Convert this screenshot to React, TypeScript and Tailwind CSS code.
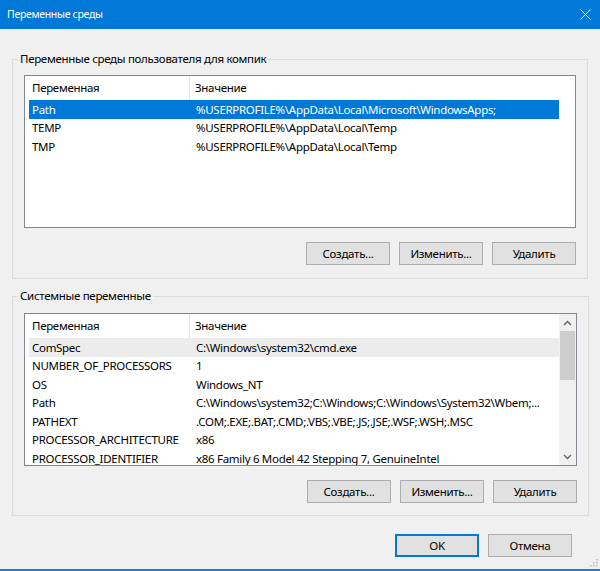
import React from 'react';

type Row = [string, string];

const USER_VARS: Row[] = [
  ['Path', '%USERPROFILE%\\AppData\\Local\\Microsoft\\WindowsApps;'],
  ['TEMP', '%USERPROFILE%\\AppData\\Local\\Temp'],
  ['TMP', '%USERPROFILE%\\AppData\\Local\\Temp'],
];

const SYSTEM_VARS: Row[] = [
  ['ComSpec', 'C:\\Windows\\system32\\cmd.exe'],
  ['NUMBER_OF_PROCESSORS', '1'],
  ['OS', 'Windows_NT'],
  ['Path', 'C:\\Windows\\system32;C:\\Windows;C:\\Windows\\System32\\Wbem;...'],
  ['PATHEXT', '.COM;.EXE;.BAT;.CMD;.VBS;.VBE;.JS;.JSE;.WSF;.WSH;.MSC'],
  ['PROCESSOR_ARCHITECTURE', 'x86'],
  ['PROCESSOR_IDENTIFIER', 'x86 Family 6 Model 42 Stepping 7, GenuineIntel'],
];

function Chevron({ up }: { up?: boolean }) {
  return (
    <svg width="9" height="6" viewBox="0 0 9 6" className="block">
      <polyline
        points={up ? '1,5 4.5,1.5 8,5' : '1,1 4.5,4.5 8,1'}
        fill="none"
        stroke="#606060"
        strokeWidth="1.3"
      />
    </svg>
  );
}

function VarList({ rows, selected, hovered, scroll }: {
  rows: Row[];
  selected?: number;
  hovered?: number;
  scroll?: boolean;
}) {
  return (
    <div className="flex h-[153px] border border-[#828790] bg-white">
      <div className="min-w-0 flex-1 overflow-hidden">
        {/* header */}
        <div className="flex h-[24px] items-center">
          <div className="w-[165px] border-r border-[#e5e5e5] pl-[7px] leading-[24px]">Переменная</div>
          <div className="pl-[5px]">Значение</div>
        </div>
        {rows.map(([name, value], i) => (
          <div
            key={name + i}
            className={`ml-[4px] flex h-[18.5px] w-[530px] items-center whitespace-nowrap ${
              i === selected ? 'bg-[#0078d7] text-white' : i === hovered ? 'bg-[#ececec]' : ''
            }`}
          >
            <div className="w-[161px] overflow-hidden pl-[3px]">{name}</div>
            <div className="flex-1 overflow-hidden pl-[6px]">{value}</div>
          </div>
        ))}
      </div>
      {scroll && (
        <div className="flex w-[17px] flex-col bg-[#f0f0f0]">
          <div className="flex h-[17px] items-center justify-center">
            <Chevron up />
          </div>
          <div className="mx-[1px] h-[49px] bg-[#cdcdcd]" />
          <div className="flex-1" />
          <div className="flex h-[17px] items-center justify-center">
            <Chevron />
          </div>
        </div>
      )}
    </div>
  );
}

function WinButton({ children, primary }: { children: React.ReactNode; primary?: boolean }) {
  return (
    <button
      type="button"
      className={`h-[23px] w-[84px] bg-[#e1e1e1] text-black ${
        primary ? 'border-2 border-[#0078d7]' : 'border border-[#adadad]'
      }`}
    >
      {children}
    </button>
  );
}

function GroupBox({ title, children, className }: {
  title: string;
  children: React.ReactNode;
  className?: string;
}) {
  return (
    <fieldset className={`border border-[#dcdcdc] ${className ?? ''}`}>
      <legend className="ml-[5px] px-[2px] leading-[16px]">{title}</legend>
      <div className="px-[11px]">{children}</div>
    </fieldset>
  );
}

export default function App() {
  return (
    <div
      className="flex h-[571px] w-[600px] flex-col border-b-[2px] border-[#1a7fd4] bg-[#f0f0f0] text-[11.5px] tracking-[-0.3px] text-black"
      style={{ fontFamily: '"Noto Sans", "Open Sans", sans-serif' }}
    >
      {/* title bar */}
      <div className="flex h-[29px] shrink-0 items-center justify-between bg-[#0078d7] pl-[7px] pr-[9px] text-white">
        <span className="text-[10.5px]">Переменные среды</span>
        <svg width="11" height="11" viewBox="0 0 11 11">
          <path d="M0.5 0.5 L10.5 10.5 M10.5 0.5 L0.5 10.5" stroke="white" strokeWidth="1" />
        </svg>
      </div>

      <div className="relative flex flex-1 flex-col px-[12px]">
        <GroupBox title="Переменные среды пользователя для компик" className="mt-[22px] pb-[13px]">
          <div className="mt-[8px]">
            <VarList rows={USER_VARS} selected={0} />
          </div>
          <div className="mt-[14px] flex justify-end gap-[9px]">
            <WinButton>Создать...</WinButton>
            <WinButton>Изменить...</WinButton>
            <WinButton>Удалить</WinButton>
          </div>
        </GroupBox>

        <GroupBox title="Системные переменные" className="mt-[9px] pb-[12px]">
          <div className="mt-[9px]">
            <VarList rows={SYSTEM_VARS} hovered={0} scroll />
          </div>
          <div className="mt-[14px] flex justify-end gap-[9px]">
            <WinButton>Создать...</WinButton>
            <WinButton>Изменить...</WinButton>
            <WinButton>Удалить</WinButton>
          </div>
        </GroupBox>

        <div className="mt-[18px] flex justify-end gap-[9px] pr-[16px]">
          <WinButton primary>OK</WinButton>
          <WinButton>Отмена</WinButton>
        </div>

        {/* resize grip */}
        <svg width="8" height="8" viewBox="0 0 8 8" className="absolute bottom-[2px] right-[2px]">
          <rect x="6" y="0" width="1.5" height="1.5" fill="#b8b8b8" />
          <rect x="3" y="3" width="1.5" height="1.5" fill="#b8b8b8" />
          <rect x="6" y="3" width="1.5" height="1.5" fill="#b8b8b8" />
          <rect x="0" y="6" width="1.5" height="1.5" fill="#b8b8b8" />
          <rect x="3" y="6" width="1.5" height="1.5" fill="#b8b8b8" />
          <rect x="6" y="6" width="1.5" height="1.5" fill="#b8b8b8" />
        </svg>
      </div>
    </div>
  );
}
